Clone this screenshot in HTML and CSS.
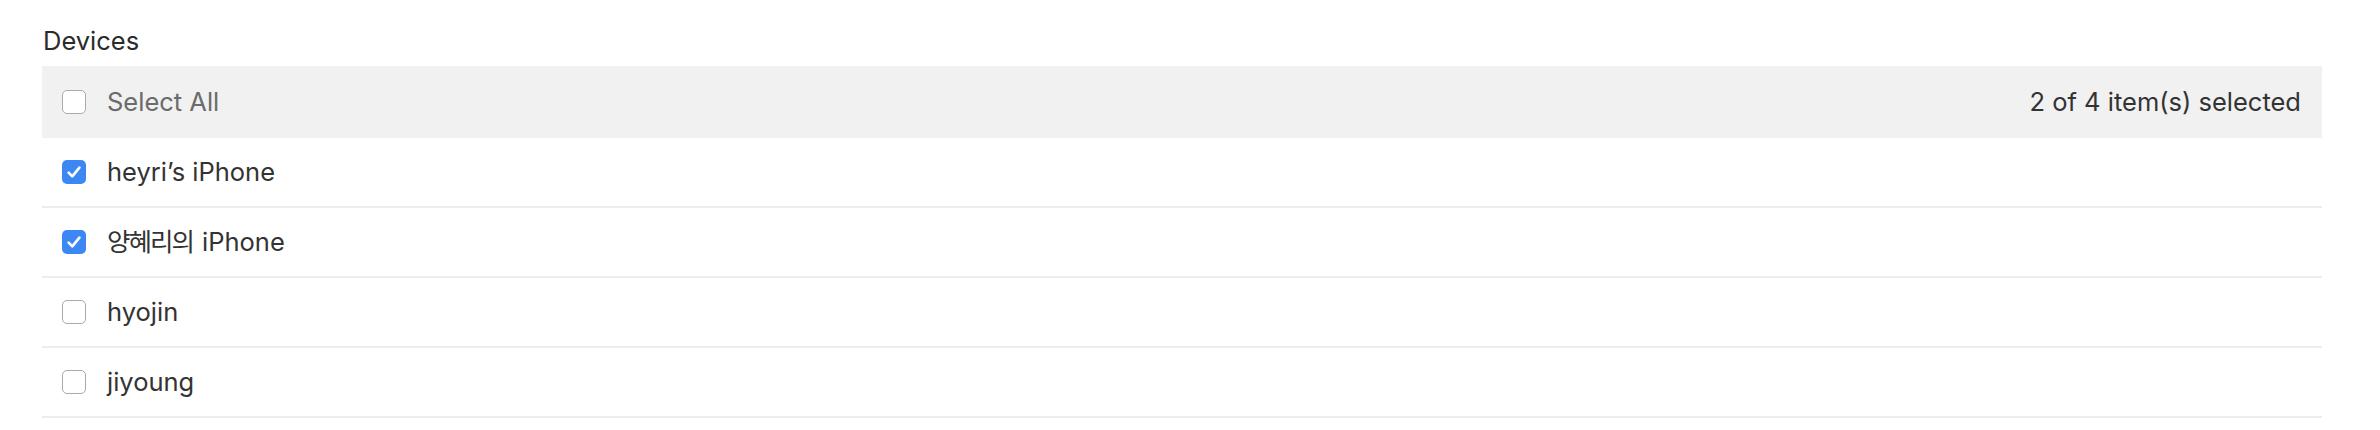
FILE: index.html
```html
<!DOCTYPE html>
<html lang="en">
<head>
<meta charset="utf-8">
<link rel="stylesheet" href="styles.css">
</head>
<body>
<section class="devices">
  <h2 class="title">Devices</h2>
  <div class="list">
    <div class="list-header">
      <label class="item">
        <span class="box"></span>
        <span class="label muted">Select All</span>
      </label>
      <span class="count">2 of 4 item(s) selected</span>
    </div>
    <div class="row">
      <span class="box checked"><svg viewBox="0 0 24 24" width="24" height="24"><path d="M6.6 12.6 L10.3 16.4 L17.4 7.6" fill="none" stroke="#fff" stroke-width="2.6" stroke-linecap="round" stroke-linejoin="round"/></svg></span>
      <span class="label">heyri’s iPhone</span>
    </div>
    <div class="row">
      <span class="box checked"><svg viewBox="0 0 24 24" width="24" height="24"><path d="M6.6 12.6 L10.3 16.4 L17.4 7.6" fill="none" stroke="#fff" stroke-width="2.6" stroke-linecap="round" stroke-linejoin="round"/></svg></span>
      <span class="label"><span class="ko">양혜리의</span> iPhone</span>
    </div>
    <div class="row">
      <span class="box"></span>
      <span class="label">hyojin</span>
    </div>
    <div class="row">
      <span class="box"></span>
      <span class="label">jiyoung</span>
    </div>
  </div>
</section>
</body>
</html>
```

FILE: styles.css
```css
html, body {
  margin: 0;
  padding: 0;
  background: #ffffff;
}
body {
  font-family: "Inter", "Noto Sans CJK KR", "Noto Sans", sans-serif;
  color: #333333;
}
.devices {
  width: 2280px;
  margin-left: 42px;
  padding-top: 24px;
}
.title {
  margin: 0 0 0 1px;
  font-size: 25.5px;
  font-weight: 400;
  line-height: 34px;
  height: 42px;
  color: #2b2b2b;
}
.list {
  display: flex;
  flex-direction: column;
}
.list-header {
  height: 72px;
  background: #f1f1f1;
  display: flex;
  align-items: center;
  justify-content: space-between;
  padding: 0 21px 0 20px;
}
.item {
  display: flex;
  align-items: center;
  gap: 21px;
}
.row {
  height: 68px;
  border-bottom: 2px solid #ededed;
  display: flex;
  align-items: center;
  gap: 21px;
  padding-left: 20px;
}
.box {
  width: 24px;
  height: 24px;
  box-sizing: border-box;
  border: 1.5px solid #aaaaaa;
  border-radius: 5px;
  background: #ffffff;
  flex: none;
  display: flex;
}
.box.checked {
  border: none;
  background: #3d87f5;
}
.label {
  font-size: 25.5px;
  line-height: 32px;
  color: #333333;
}
.label.muted {
  color: #6b6b6b;
}
.ko {
  letter-spacing: -2px;
  margin-right: 2px;
}
.count {
  font-size: 25.5px;
  line-height: 32px;
  color: #333333;
}
```
